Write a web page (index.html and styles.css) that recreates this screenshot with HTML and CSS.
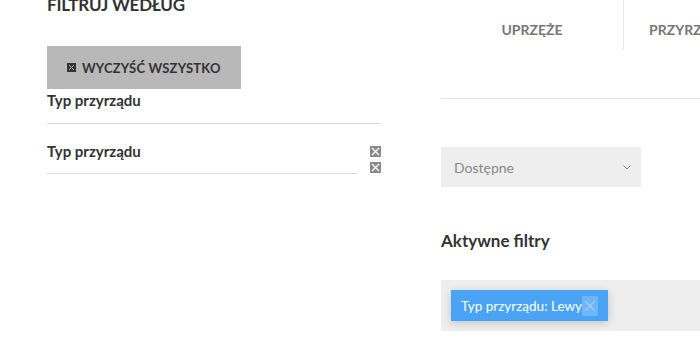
FILE: index.html
```
<!DOCTYPE html>
<html lang="pl">
<head>
  <meta charset="UTF-8" />
  <meta name="viewport" content="width=device-width, initial-scale=1.0"/>
  <title>Filtry</title>
  <link rel="stylesheet" href="styles.css">
</head>
<body>
  <div class="page">
    <aside class="sidebar">
      <h3 class="filter-title">Filtruj według</h3>
      <button class="clear-all">
        <svg class="clear-icon" viewBox="0 0 9 9" width="9" height="9">
          <rect width="9" height="9" fill="#333"/>
          <path d="M2 2 L7 7 M7 2 L2 7" stroke="#b8b8b8" stroke-width="1"/>
        </svg>
        Wyczyść wszystko
      </button>
      <div class="group-head">Typ przyrządu</div>
      <div class="group">
        <div class="group-name">Typ przyrządu</div>
        <div class="group-remove">
          <span class="x-box"><svg viewBox="0 0 11 11" width="11" height="11"><rect width="11" height="11" fill="#8a8a8a"/><path d="M2 2 L9 9 M9 2 L2 9" stroke="#fff" stroke-width="1.2"/></svg></span>
          <span class="x-box"><svg viewBox="0 0 11 11" width="11" height="11"><rect width="11" height="11" fill="#8a8a8a"/><path d="M2 2 L9 9 M9 2 L2 9" stroke="#fff" stroke-width="1.2"/></svg></span>
        </div>
      </div>
    </aside>

    <main class="content">
      <nav class="tabs">
        <a class="tab">Uprzęże</a>
        <a class="tab">Przyrządy</a>
      </nav>
      <div class="tabs-rule"></div>

      <div class="select">
        <span>Dostępne</span>
        <svg class="chev" viewBox="0 0 8 5" width="8" height="5"><path d="M0.5 0.5 L4 4 L7.5 0.5" fill="none" stroke="#888" stroke-width="1"/></svg>
      </div>

      <h3 class="active-title">Aktywne filtry</h3>
      <div class="active-bar">
        <span class="chip">Typ przyrządu: Lewy<span class="chip-x"><svg viewBox="0 0 16 20" width="16" height="20"><path d="M3 5 L13 15 M13 5 L3 15" stroke="#9fcdf8" stroke-width="1.2"/></svg></span></span>
      </div>
    </main>
  </div>
</body>
</html>
```

FILE: styles.css
```
* { margin: 0; padding: 0; box-sizing: border-box; }
body { font-family: 'Lato', 'Noto Sans', sans-serif; background: #fff; color: #333; overflow: hidden; }
.page { display: grid; grid-template-columns: 334px 500px; column-gap: 60px; padding-left: 47px; }

.filter-title { font-size: 17px; font-weight: 700; text-transform: uppercase; color: #333; line-height: 22px; margin-top: -6px; letter-spacing: -0.2px; }
.clear-all { display: flex; align-items: center; gap: 6px; margin-top: 30px; width: 194px; height: 43px; padding-left: 20px; border: none; background: #b8b8b8; color: #333; font-family: inherit; font-size: 13px; font-weight: 700; text-transform: uppercase; letter-spacing: 0.2px; }
.clear-icon { display: block; }
.group-head { font-size: 15px; font-weight: 700; line-height: 20px; padding-top: 1px; height: 35px; border-bottom: 1px solid #d9d9d9; }
.group { display: flex; align-items: flex-start; margin-top: 20px; }
.group-name { width: 312px; font-size: 15px; font-weight: 700; line-height: 18px; height: 32px; border-bottom: 1px solid #d9d9d9; margin-top: -2px; }
.group-remove { display: flex; flex-direction: column; gap: 5px; margin-left: 13px; padding-top: 2px; }
.x-box svg { display: block; }

.tabs { display: flex; height: 50px; }
.tab { width: 182px; display: flex; align-items: center; justify-content: center; color: #777; font-size: 14px; font-weight: 700; text-transform: uppercase; padding-top: 8px; }
.tab + .tab { border-left: 1px solid #e6e6e6; justify-content: flex-start; padding-left: 25px; }
.tabs-rule { margin-top: 48px; border-top: 1px solid #e3e3e3; }

.select { display: flex; align-items: center; justify-content: space-between; margin-top: 48px; width: 200px; height: 40px; padding: 0 13px; background: #eee; color: #888; font-size: 14px; }
.chev { display: block; margin-right: -3px; }

.active-title { margin-top: 43px; font-size: 17px; font-weight: 700; color: #333; line-height: 22px; }
.active-bar { margin-top: 28px; height: 51px; padding: 10px; background: #eee; }
.chip { display: inline-flex; align-items: center; height: 31px; padding: 0 10px; background: #4aa3f5; color: #fff; font-size: 13.5px; box-shadow: 0 2px 8px rgba(0,0,0,0.18); }
.chip-x { display: block; background: #6fb6f7; }
.chip-x svg { display: block; }
```
